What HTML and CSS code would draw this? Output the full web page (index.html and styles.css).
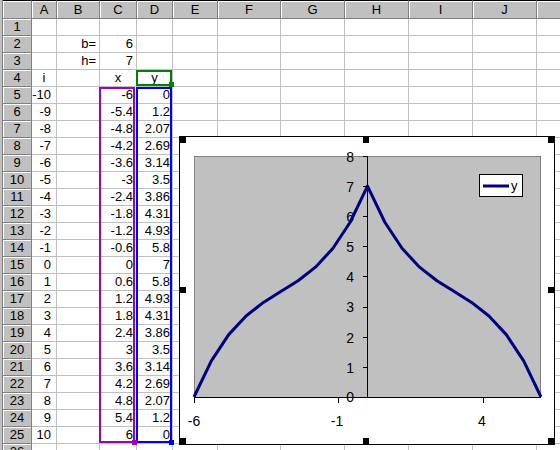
FILE: index.html
```html
<!DOCTYPE html>
<html>
<head>
<meta charset="utf-8">
<link rel="stylesheet" href="styles.css">
</head>
<body>
<div class="app">
  <div class="frame"></div>
  <div class="sheet">
    <div class="cn"></div><div class="ch">A</div><div class="ch">B</div><div class="ch">C</div><div class="ch">D</div><div class="ch">E</div><div class="ch">F</div><div class="ch">G</div><div class="ch">H</div><div class="ch">I</div><div class="ch">J</div><div class="ch"></div>
    <div class="rh">1</div><div></div><div></div><div></div><div></div><div></div><div></div><div></div><div></div><div></div><div></div><div></div>
    <div class="rh">2</div><div></div><div class="r">b=</div><div class="r">6</div><div></div><div></div><div></div><div></div><div></div><div></div><div></div><div></div>
    <div class="rh">3</div><div></div><div class="r">h=</div><div class="r">7</div><div></div><div></div><div></div><div></div><div></div><div></div><div></div><div></div>
    <div class="rh">4</div><div class="c">i</div><div></div><div class="c">x</div><div class="c">y</div><div></div><div></div><div></div><div></div><div></div><div></div><div></div>
    <div class="rh">5</div><div class="a">-10</div><div></div><div class="r">-6</div><div class="rd">0</div><div></div><div></div><div></div><div></div><div></div><div></div><div></div>
    <div class="rh">6</div><div class="a">-9</div><div></div><div class="r">-5.4</div><div class="rd">1.2</div><div></div><div></div><div></div><div></div><div></div><div></div><div></div>
    <div class="rh">7</div><div class="a">-8</div><div></div><div class="r">-4.8</div><div class="rd">2.07</div><div></div><div></div><div></div><div></div><div></div><div></div><div></div>
    <div class="rh">8</div><div class="a">-7</div><div></div><div class="r">-4.2</div><div class="rd">2.69</div><div></div><div></div><div></div><div></div><div></div><div></div><div></div>
    <div class="rh">9</div><div class="a">-6</div><div></div><div class="r">-3.6</div><div class="rd">3.14</div><div></div><div></div><div></div><div></div><div></div><div></div><div></div>
    <div class="rh">10</div><div class="a">-5</div><div></div><div class="r">-3</div><div class="rd">3.5</div><div></div><div></div><div></div><div></div><div></div><div></div><div></div>
    <div class="rh">11</div><div class="a">-4</div><div></div><div class="r">-2.4</div><div class="rd">3.86</div><div></div><div></div><div></div><div></div><div></div><div></div><div></div>
    <div class="rh">12</div><div class="a">-3</div><div></div><div class="r">-1.8</div><div class="rd">4.31</div><div></div><div></div><div></div><div></div><div></div><div></div><div></div>
    <div class="rh">13</div><div class="a">-2</div><div></div><div class="r">-1.2</div><div class="rd">4.93</div><div></div><div></div><div></div><div></div><div></div><div></div><div></div>
    <div class="rh">14</div><div class="a">-1</div><div></div><div class="r">-0.6</div><div class="rd">5.8</div><div></div><div></div><div></div><div></div><div></div><div></div><div></div>
    <div class="rh">15</div><div class="a">0</div><div></div><div class="r">0</div><div class="rd">7</div><div></div><div></div><div></div><div></div><div></div><div></div><div></div>
    <div class="rh">16</div><div class="a">1</div><div></div><div class="r">0.6</div><div class="rd">5.8</div><div></div><div></div><div></div><div></div><div></div><div></div><div></div>
    <div class="rh">17</div><div class="a">2</div><div></div><div class="r">1.2</div><div class="rd">4.93</div><div></div><div></div><div></div><div></div><div></div><div></div><div></div>
    <div class="rh">18</div><div class="a">3</div><div></div><div class="r">1.8</div><div class="rd">4.31</div><div></div><div></div><div></div><div></div><div></div><div></div><div></div>
    <div class="rh">19</div><div class="a">4</div><div></div><div class="r">2.4</div><div class="rd">3.86</div><div></div><div></div><div></div><div></div><div></div><div></div><div></div>
    <div class="rh">20</div><div class="a">5</div><div></div><div class="r">3</div><div class="rd">3.5</div><div></div><div></div><div></div><div></div><div></div><div></div><div></div>
    <div class="rh">21</div><div class="a">6</div><div></div><div class="r">3.6</div><div class="rd">3.14</div><div></div><div></div><div></div><div></div><div></div><div></div><div></div>
    <div class="rh">22</div><div class="a">7</div><div></div><div class="r">4.2</div><div class="rd">2.69</div><div></div><div></div><div></div><div></div><div></div><div></div><div></div>
    <div class="rh">23</div><div class="a">8</div><div></div><div class="r">4.8</div><div class="rd">2.07</div><div></div><div></div><div></div><div></div><div></div><div></div><div></div>
    <div class="rh">24</div><div class="a">9</div><div></div><div class="r">5.4</div><div class="rd">1.2</div><div></div><div></div><div></div><div></div><div></div><div></div><div></div>
    <div class="rh">25</div><div class="a">10</div><div></div><div class="r">6</div><div class="rd">0</div><div></div><div></div><div></div><div></div><div></div><div></div><div></div>
    <div class="rh">26</div><div></div><div></div><div></div><div></div><div></div><div></div><div></div><div></div><div></div><div></div><div></div>
  </div>

  <div class="sel sel-x"></div>
  <div class="sel sel-y"></div>
  <div class="sel sel-name"></div>
  <div class="knob knob-name"></div>
  <div class="knob knob-x"></div>
  <div class="knob knob-y"></div>

  <div class="chart">
    <svg class="plot" width="374" height="307" viewBox="180 137 374 307">
      <rect x="194.5" y="156.5" width="346" height="241" fill="#c0c0c0" stroke="#808080" stroke-width="1"/>
      <line x1="194" y1="397.5" x2="541" y2="397.5" stroke="#000" stroke-width="1"/>
      <line x1="367.5" y1="156" x2="367.5" y2="398" stroke="#000" stroke-width="1"/>
      <g stroke="#000" stroke-width="1">
        <line x1="363" y1="156.5" x2="368" y2="156.5"/>
        <line x1="363" y1="186.5" x2="368" y2="186.5"/>
        <line x1="363" y1="216.5" x2="368" y2="216.5"/>
        <line x1="363" y1="246.5" x2="368" y2="246.5"/>
        <line x1="363" y1="276.5" x2="368" y2="276.5"/>
        <line x1="363" y1="307.5" x2="368" y2="307.5"/>
        <line x1="363" y1="337.5" x2="368" y2="337.5"/>
        <line x1="363" y1="367.5" x2="368" y2="367.5"/>
        <line x1="363" y1="397.5" x2="368" y2="397.5"/>
        <line x1="194.5" y1="397" x2="194.5" y2="403"/>
        <line x1="338.5" y1="397" x2="338.5" y2="403"/>
        <line x1="483.5" y1="397" x2="483.5" y2="403"/>
      </g>
      <g class="lbl" text-anchor="end">
        <text x="354" y="162">8</text>
        <text x="354" y="192">7</text>
        <text x="354" y="222">6</text>
        <text x="354" y="252">5</text>
        <text x="354" y="282">4</text>
        <text x="354" y="312">3</text>
        <text x="354" y="343">2</text>
        <text x="354" y="373">1</text>
        <text x="354" y="402">0</text>
      </g>
      <g class="lbl" text-anchor="middle">
        <text x="194" y="426">-6</text>
        <text x="337" y="426">-1</text>
        <text x="482" y="426">4</text>
      </g>
      <polyline fill="none" stroke="#000080" stroke-width="3" stroke-linejoin="round" points="194,397 211.35,360.85 228.7,334.64 246.05,315.96 263.4,302.41 280.75,291.56 298.1,280.72 315.45,267.16 332.8,248.48 350.15,222.27 367.5,186.13 384.85,222.27 402.2,248.48 419.55,267.16 436.9,280.72 454.25,291.56 471.6,302.41 488.95,315.96 506.3,334.64 523.65,360.85 541,397"/>
      <rect x="479.5" y="174.5" width="43" height="22" fill="#fff" stroke="#000" stroke-width="1"/>
      <line x1="483" y1="186" x2="509" y2="186" stroke="#000080" stroke-width="3"/>
      <text class="lbl lg" x="511" y="190">y</text>
    </svg>
    <div class="h tl"></div><div class="h tm"></div><div class="h tr"></div>
    <div class="h lm"></div><div class="h rm"></div>
    <div class="h bl"></div><div class="h bm"></div><div class="h br"></div>
  </div>
</div>
</body>
</html>
```

FILE: styles.css
```css
html, body {
  margin: 0;
  padding: 0;
  background: #fff;
  overflow: hidden;
}

.app {
  position: relative;
  display: flex;
  width: 560px;
  height: 450px;
  overflow: hidden;
  font-family: "Liberation Sans", Arial, sans-serif;
  font-size: 13px;
  color: #000;
}

.frame {
  flex: 0 0 3px;
  background: linear-gradient(to right, #c0c0c0 0 2px, #808080 2px 3px);
}

.sheet {
  flex: 0 0 auto;
  display: grid;
  grid-template-columns: 29px 25px 43px 37px 36px 45px 63px 64px 64px 64px 64px 64px;
  grid-template-rows: 19px;
  grid-auto-rows: 17px;
}

.sheet > div {
  box-sizing: border-box;
  border-right: 1px solid #c0c0c0;
  border-bottom: 1px solid #c0c0c0;
  line-height: 16px;
  white-space: nowrap;
  overflow: hidden;
  background: #fff;
}

.sheet > .cn,
.sheet > .ch {
  background: #c0c0c0;
  border-top: 1px solid #000;
  border-right: 1px solid #808080;
  border-bottom: 1px solid #808080;
  box-shadow: inset 1px 1px 0 #fff;
  text-align: center;
  line-height: 17px;
}

.sheet > .rh {
  background: #c0c0c0;
  border-right: 1px solid #808080;
  border-bottom: 1px solid #808080;
  box-shadow: inset 1px 1px 0 #fff;
  text-align: center;
}

.sheet > .a {
  display: flex;
  justify-content: flex-end;
  padding-right: 5px;
}

.sheet > .r {
  text-align: right;
  padding-right: 3px;
}

.sheet > .rd {
  text-align: right;
  padding-right: 2px;
}

.sheet > .c {
  text-align: center;
}

/* range-finder outlines */
.sel {
  position: absolute;
  box-sizing: border-box;
  border: 2px solid;
}

.sel-x {
  left: 99px;
  top: 87px;
  width: 36px;
  height: 356px;
  border-color: #9900cc;
}

.sel-y {
  left: 136px;
  top: 87px;
  width: 36px;
  height: 356px;
  border-color: #0000ff;
}

.sel-name {
  left: 136px;
  top: 70px;
  width: 36px;
  height: 16px;
  border-color: #008000;
}

.knob {
  position: absolute;
  width: 5px;
  height: 5px;
}

.knob-name {
  left: 169px;
  top: 82px;
  background: #008000;
}

.knob-x {
  left: 132px;
  top: 440px;
  background: #9900cc;
}

.knob-y {
  left: 169px;
  top: 440px;
  background: #0000ff;
}

/* embedded chart */
.chart {
  position: absolute;
  left: 179px;
  top: 136px;
  width: 374px;
  height: 307px;
  border: 1px solid #000;
  background: #fff;
}

.plot {
  display: block;
}

.lbl {
  font-family: "Liberation Sans", Arial, sans-serif;
  font-size: 14px;
  fill: #000;
}

.lbl.lg {
  font-size: 13px;
}

.h {
  position: absolute;
  width: 6px;
  height: 6px;
  background: #000;
}

.tl { left: 0; top: 0; }
.tm { left: 183px; top: 0; }
.tr { right: 0; top: 0; }
.lm { left: 0; top: 150px; }
.rm { right: 0; top: 150px; }
.bl { left: 0; bottom: 0; }
.bm { left: 183px; bottom: 0; }
.br { right: 0; bottom: 0; }
```
